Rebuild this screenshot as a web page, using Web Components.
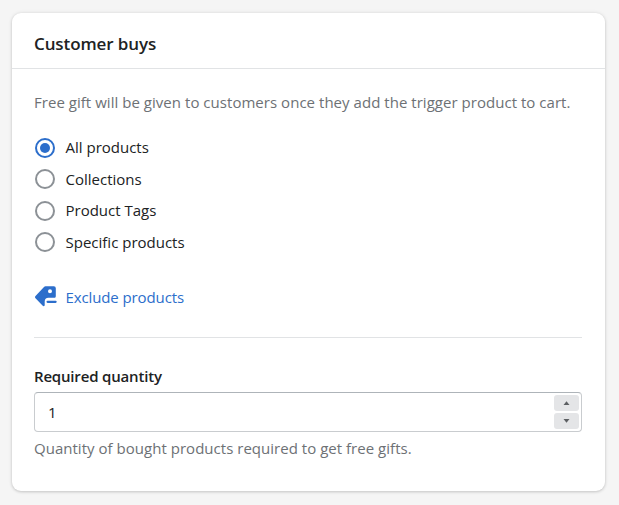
<!DOCTYPE html>
<html lang="en">
<head>
<meta charset="utf-8">
<title>Customer buys</title>
<style>
    body {
        margin: 0;
        padding: 13px 14px 14px 12px;
        background: #f5f5f5;
        color: #202223;
        font: 15px/20px "Open Sans", "Noto Sans", sans-serif;
    }
</style>
</head>
<body>
<settings-card>
    <span slot="title">Customer buys</span>
    <help-text style="letter-spacing: 0.035px">Free gift will be given to customers once they add the trigger product to cart.</help-text>
    <radio-list>
        <radio-option checked>All products</radio-option>
        <radio-option>Collections</radio-option>
        <radio-option>Product Tags</radio-option>
        <radio-option>Specific products</radio-option>
    </radio-list>
    <exclude-link>Exclude products</exclude-link>
    <quantity-field value="1">
        <span slot="label">Required quantity</span>
        <help-text slot="help" style="letter-spacing: 0.025px">Quantity of bought products required to get free gifts.</help-text>
    </quantity-field>
</settings-card>

<script>
class SettingsCard extends HTMLElement {
    constructor() {
        super();
        this.attachShadow({ mode: 'open' });
    }

    connectedCallback() {
        this.shadowRoot.innerHTML = `
            <style>
                :host {
                    display: block;
                    box-sizing: border-box;
                    height: 478px;
                    background: #fff;
                    border-radius: 9px;
                    box-shadow: 0 0 4px rgba(23,24,24,0.08), 0 1px 3px rgba(0,0,0,0.16);
                }
                h2 {
                    box-sizing: border-box;
                    height: 56px;
                    margin: 0;
                    padding: 19px 22px 0;
                    border-bottom: 1px solid #e1e3e5;
                    font-size: 17px;
                    line-height: 24px;
                    font-weight: 600;
                    letter-spacing: -0.1px;
                }
                .body {
                    padding: 23px 23px 0 22px;
                }
            </style>
            <h2><slot name="title"></slot></h2>
            <div class="body"><slot></slot></div>
        `;
    }
}

class HelpText extends HTMLElement {
    constructor() {
        super();
        this.attachShadow({ mode: 'open' });
    }

    connectedCallback() {
        this.shadowRoot.innerHTML = `
            <style>
                :host {
                    display: block;
                    color: #6d7175;
                    white-space: nowrap;
                }
            </style>
            <slot></slot>
        `;
    }
}

class RadioList extends HTMLElement {
    constructor() {
        super();
        this.attachShadow({ mode: 'open' });
    }

    connectedCallback() {
        this.shadowRoot.innerHTML = `
            <style>
                :host {
                    display: grid;
                    gap: 11.5px;
                    padding: 25.5px 0 0 1px;
                }
            </style>
            <slot></slot>
        `;
    }
}

class RadioOption extends HTMLElement {
    constructor() {
        super();
        this.attachShadow({ mode: 'open' });
    }

    connectedCallback() {
        this.shadowRoot.innerHTML = `
            <style>
                :host {
                    display: flex;
                    align-items: center;
                    gap: 10.5px;
                    height: 20px;
                    cursor: pointer;
                }
                .dot {
                    box-sizing: border-box;
                    display: grid;
                    place-items: center;
                    width: 20px;
                    height: 20px;
                    border: 2px solid #8c9196;
                    border-radius: 50%;
                }
                .text {
                    padding-bottom: 1px;
                }
                :host([checked]) .dot {
                    border-color: #2c6ecb;
                }
                :host([checked]) .dot::after {
                    content: "";
                    width: 10px;
                    height: 10px;
                    border-radius: 50%;
                    background: #2c6ecb;
                }
            </style>
            <span class="dot"></span>
            <span class="text"><slot></slot></span>
        `;
        this.addEventListener('click', () => {
            this.parentElement.querySelectorAll('radio-option').forEach((o) => o.removeAttribute('checked'));
            this.setAttribute('checked', '');
        });
    }
}

class ExcludeLink extends HTMLElement {
    constructor() {
        super();
        this.attachShadow({ mode: 'open' });
    }

    connectedCallback() {
        this.shadowRoot.innerHTML = `
            <style>
                :host {
                    display: flex;
                    align-items: center;
                    gap: 8.5px;
                    height: 22px;
                    margin-top: 33.5px;
                    padding: 0 0 29px 1px;
                    border-bottom: 1px solid #e1e3e5;
                    color: #2c6ecb;
                    letter-spacing: -0.11px;
                }
                svg {
                    display: block;
                }
            </style>
            <svg width="22" height="22" viewBox="0 0 22 22" fill="#2c6ecb">
                <path fill-rule="evenodd" d="M10.5 .3H18.800A2 2 0 0 1 20.800 2.300V10.200a2 2 0 0 1-.7 1.500H13.500A4 4 0 0 0 9.700 15.700V19.600a1.500 1.500 0 0 1-2.200 0L.5 12.200a1.600 1.600 0 0 1 0-2.200L9 1A2 2 0 0 1 10.500 .3zM15 3.300a2 2 0 1 0 0 4 2 2 0 0 0 0-4z"/>
                <rect x="11.500" y="14.700" width="10.200" height="2.200" rx="1.100"/>
            </svg>
            <span><slot></slot></span>
        `;
    }
}

class QuantityField extends HTMLElement {
    constructor() {
        super();
        this.attachShadow({ mode: 'open' });
    }

    connectedCallback() {
        this.shadowRoot.innerHTML = `
            <style>
                :host {
                    display: block;
                    padding-top: 28px;
                }
                .label {
                    height: 20px;
                    margin-bottom: 6px;
                    font-weight: 600;
                    letter-spacing: -0.18px;
                }
                .box {
                    box-sizing: border-box;
                    display: flex;
                    justify-content: space-between;
                    align-items: center;
                    height: 40px;
                    padding: 0 2px 0 13px;
                    border: 1px solid #c9cccf;
                    border-top-color: #aeb4b9;
                    border-radius: 4px;
                    margin-bottom: 6px;
                }
                .spinner {
                    display: grid;
                    gap: 2px;
                }
                button {
                    display: grid;
                    place-items: center;
                    width: 25px;
                    height: 16px;
                    padding: 0;
                    border: 0;
                    border-radius: 3px;
                    background: #e4e5e7;
                }
            </style>
            <div class="label"><slot name="label"></slot></div>
            <div class="box">
                <span class="value">${this.getAttribute('value')}</span>
                <div class="spinner">
                    <button data-step="1" aria-label="Increase"><svg width="7" height="4" fill="#5c5f62"><path d="M.5 4 3.500 .3 6.500 4z"/></svg></button>
                    <button data-step="-1" aria-label="Decrease"><svg width="7" height="4" fill="#5c5f62"><path d="M.5 0 3.500 3.700 6.500 0z"/></svg></button>
                </div>
            </div>
            <slot name="help"></slot>
        `;
        const value = this.shadowRoot.querySelector('.value');
        this.shadowRoot.querySelectorAll('button').forEach((button) => {
            button.addEventListener('click', () => {
                value.textContent = Math.max(1, Number(value.textContent) + Number(button.dataset.step));
            });
        });
    }
}

customElements.define('settings-card', SettingsCard);
customElements.define('help-text', HelpText);
customElements.define('radio-list', RadioList);
customElements.define('radio-option', RadioOption);
customElements.define('exclude-link', ExcludeLink);
customElements.define('quantity-field', QuantityField);
</script>
</body>
</html>
